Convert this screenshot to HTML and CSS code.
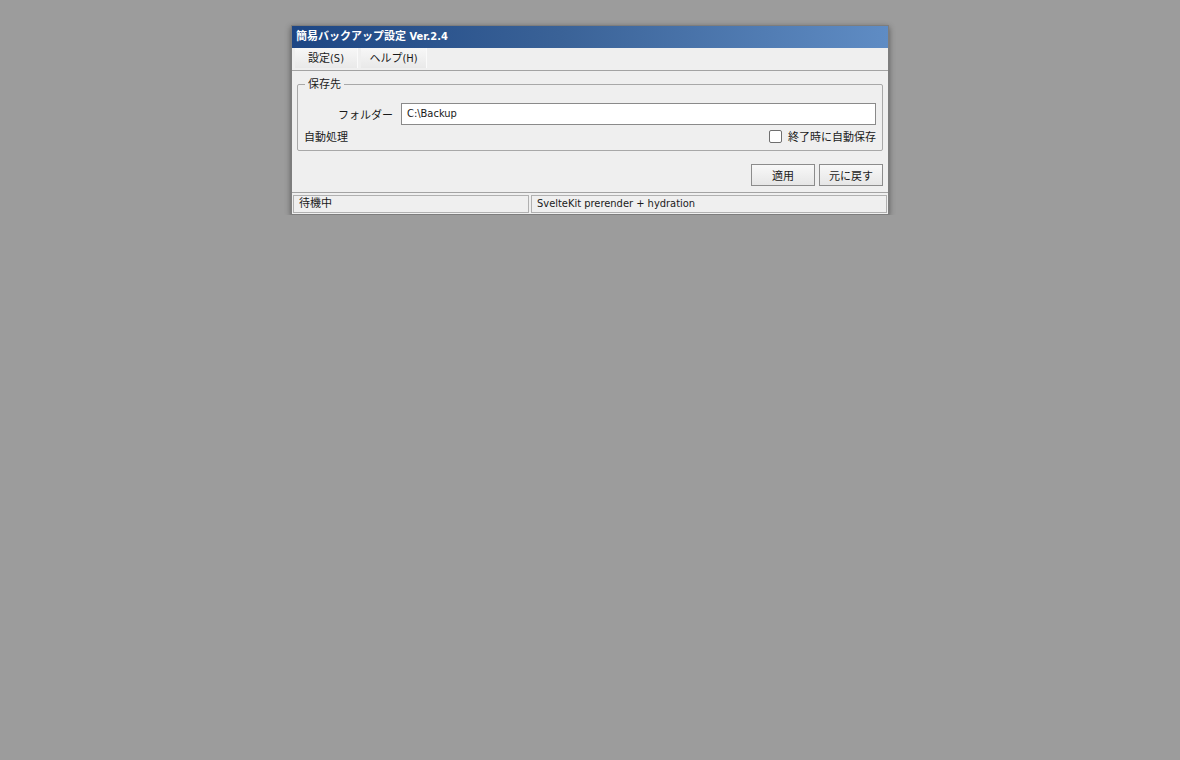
FILE: index.html
```html
<!DOCTYPE html>
<html lang="ja">
<head>
<meta charset="utf-8">
<title>簡易バックアップ設定</title>
<link rel="stylesheet" href="styles.css">
</head>
<body>
<div class="window">
  <div class="titlebar">簡易バックアップ設定 Ver.2.4</div>
  <div class="menubar">
    <span class="menuitem">設定(S)</span>
    <span class="menuitem">ヘルプ(H)</span>
  </div>
  <div class="content">
    <fieldset class="group">
      <legend>保存先</legend>
      <div class="row folder-row">
        <label class="field-label">フォルダー</label>
        <div class="textbox">C:\Backup</div>
      </div>
      <div class="row auto-row">
        <span>自動処理</span>
        <label class="check"><span class="checkbox"></span>終了時に自動保存</label>
      </div>
    </fieldset>
    <div class="buttons">
      <button class="btn">適用</button>
      <button class="btn">元に戻す</button>
    </div>
  </div>
  <div class="statusbar">
    <div class="cell cell-left">待機中</div>
    <div class="cell cell-right">SvelteKit prerender + hydration</div>
  </div>
</div>
</body>
</html>
```
FILE: styles.css
```css
html, body {
  margin: 0;
  padding: 0;
  background: #9c9c9c;
  font-family: "DejaVu Sans Condensed", "DejaVu Sans", "Noto Sans CJK JP", sans-serif;
  font-size: 11px;
  color: #1a1a1a;
}
body {
  padding-top: 25px;
}
.window {
  width: 598px;
  margin: 0 auto;
  box-sizing: border-box;
  border: 1px solid #7d7d7d;
  background: #efefef;
  box-shadow: 0 2px 6px rgba(0,0,0,0.45);
}
.titlebar {
  height: 22px;
  line-height: 21px;
  padding-left: 4px;
  color: #fff;
  font-weight: bold;
  background: linear-gradient(to right, #1d4684 0%, #3a6297 45%, #5f8cc4 100%);
}
.menubar {
  display: flex;
  gap: 3px;
  padding-left: 3px;
  border-bottom: 1px solid #a3a3a3;
  box-sizing: border-box;
  height: 23px;
}
.menuitem {
  width: 63px;
  height: 20px;
  line-height: 22px;
  text-align: center;
  background: linear-gradient(#f7f7f7, #e9e9e9);
  border-right: 1px solid #fafafa;
  box-sizing: border-box;
}
.menuitem + .menuitem { width: 66px; }
.content {
  padding: 7px 5px 6px 5px;
}
.group {
  margin: 0;
  border: 1px solid #a8a8a8;
  border-radius: 2px;
  padding: 11px 6px 3px 6px;
  min-width: 0;
}
.group legend {
  padding: 0 3px;
  margin-left: 1px;
  line-height: 13px;
}
.row {
  display: flex;
  align-items: center;
}
.folder-row {
  gap: 8px;
  padding-top: 1px;
}
.field-label {
  width: 89px;
  text-align: right;
  flex: none;
}
.textbox {
  flex: 1;
  height: 22px;
  line-height: 20px;
  box-sizing: border-box;
  border: 1px solid #8a8a8a;
  background: #fff;
  padding-left: 5px;
}
.auto-row {
  justify-content: space-between;
  height: 22px;
}
.check {
  display: flex;
  align-items: center;
  gap: 6px;
}
.checkbox {
  width: 11px;
  height: 11px;
  border: 1px solid #6f6f6f;
  border-radius: 2px;
  background: #fff;
}
.buttons {
  display: flex;
  justify-content: flex-end;
  gap: 4px;
  padding-top: 13px;
}
.btn {
  width: 64px;
  height: 22px;
  font: inherit;
  color: #1a1a1a;
  border: 1px solid #8c8c8c;
  background: linear-gradient(#f8f8f8, #e6e6e6);
  padding: 0;
  margin: 0;
}
.statusbar {
  border-top: 1px solid #a3a3a3;
  display: flex;
  gap: 2px;
  padding: 2px 1px 1px 1px;
}
.cell {
  height: 18px;
  line-height: 16px;
  box-sizing: border-box;
  border: 1px solid #b0b0b0;
  padding-left: 5px;
}
.cell-left { width: 236px; }
.cell-right { flex: 1; }
```
